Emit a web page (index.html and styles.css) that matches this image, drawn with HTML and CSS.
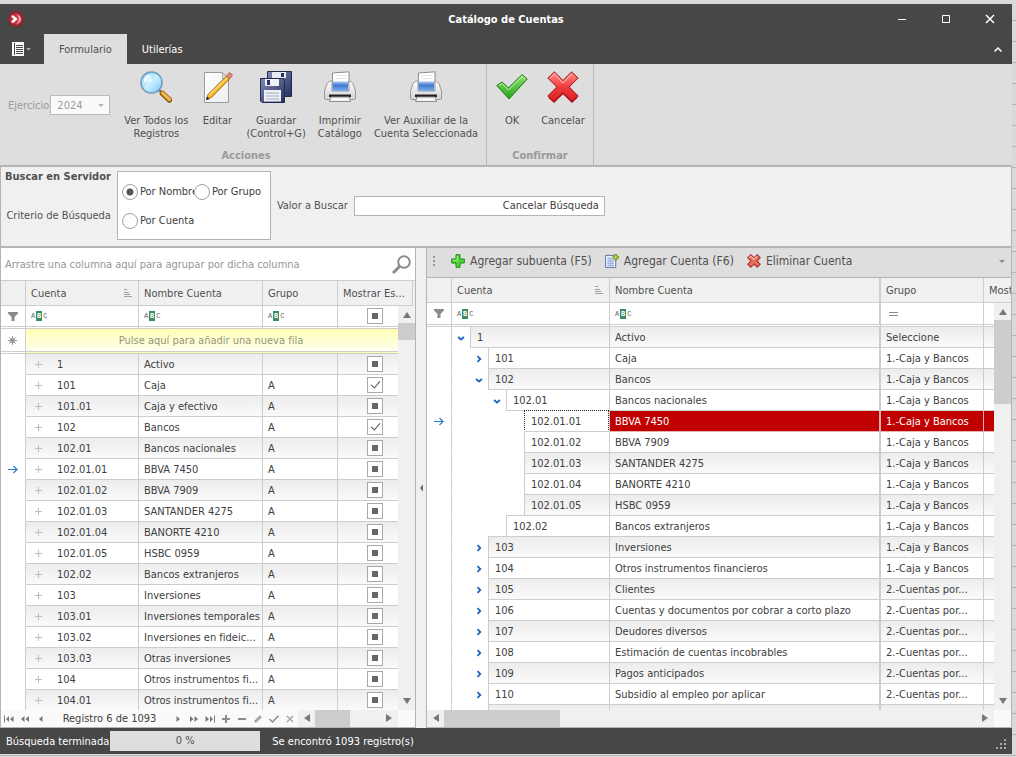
FILE: index.html
```html
<!DOCTYPE html>
<html lang="es">
<head>
    <meta charset="UTF-8">
    <meta name="viewport" content="width=device-width, initial-scale=1.0">
    <title>Catálogo de Cuentas</title>
    <link rel="stylesheet" href="styles.css">
</head>
<body>
    <!-- Iconos compartidos -->
    <svg class="sprite" aria-hidden="true">
        <defs>
            <linearGradient id="g-lens" x1="0" y1="0" x2="1" y2="1"><stop offset="0" stop-color="#8fd0fa"/><stop offset=".5" stop-color="#c9f0ff"/><stop offset="1" stop-color="#79c2f3"/></linearGradient>
            <linearGradient id="g-page" x1="0" y1="0" x2="1" y2="1"><stop offset="0" stop-color="#fff"/><stop offset="1" stop-color="#ececec"/></linearGradient>
            <linearGradient id="g-disk" x1="0" y1="0" x2="1" y2="1"><stop offset="0" stop-color="#7f8cb5"/><stop offset="1" stop-color="#262f5c"/></linearGradient>
            <linearGradient id="g-print" x1="0" y1="0" x2="0" y2="1"><stop offset="0" stop-color="#fff"/><stop offset="1" stop-color="#d2d2d6"/></linearGradient>
            <linearGradient id="g-blue" x1="0" y1="0" x2="0" y2="1"><stop offset="0" stop-color="#a8ccf5"/><stop offset=".4" stop-color="#4279cb"/><stop offset="1" stop-color="#7db0ee"/></linearGradient>
            <linearGradient id="g-green" x1="0" y1="0" x2="0" y2="1"><stop offset="0" stop-color="#8fe36a"/><stop offset="1" stop-color="#25a51b"/></linearGradient>
            <linearGradient id="g-red" x1="0" y1="0" x2="0" y2="1"><stop offset="0" stop-color="#ff8f8b"/><stop offset=".5" stop-color="#ef3a3a"/><stop offset="1" stop-color="#d81f25"/></linearGradient>
            <radialGradient id="g-logo" cx=".5" cy=".5" r=".5"><stop offset="0" stop-color="#d8505a"/><stop offset=".7" stop-color="#b82a35"/><stop offset="1" stop-color="#8f1822"/></radialGradient>
        </defs>
        <symbol id="i-print" viewBox="0 0 32 32">
            <path d="M8.500 2L25 .8V12H8.500z" fill="#fff" stroke="#8c8c8c"/>
            <path d="M11 4.500h11M11 7.500h11" stroke="#e4e4e4"/>
            <path d="M3 12.500L6 10h2v10h17V10h1l3 2.500L31.500 20v7q0 1.500-1.500 1.500H2Q.5 28.500.5 27v-7z" fill="url(#g-print)" stroke="#9a9a9e"/>
            <path d="M8.500 10.500H24V20H8.500z" fill="url(#g-blue)"/>
            <path d="M5 23.500h22v2.500H5z" fill="#222"/>
            <path d="M7 26h18l1.500 4.500h-21z" fill="#f5f5f5" stroke="#8c8c8c"/>
        </symbol>
        <symbol id="i-sort" viewBox="0 0 8 8"><path d="M0 .5h3M0 3.500h5M0 5.500h6M0 7.500h8" stroke="#a0a0a0"/></symbol>
        <symbol id="i-filter" viewBox="0 0 10 9"><path d="M0 0h10v1.500L6.500 5v4h-3V5L0 1.500z" fill="#8c8c8c"/></symbol>
        <symbol id="i-arrow" viewBox="0 0 10 9"><path d="M0 4.500h9M5.500 1l3.500 3.500L5.500 8" fill="none" stroke="#2e7ad0" stroke-width="1.200"/></symbol>
        <symbol id="i-closed" viewBox="0 0 8 8"><path d="M2.500 1.200L5.300 4 2.500 6.800" fill="none" stroke="#1f66bf" stroke-width="1.800"/></symbol>
        <symbol id="i-open" viewBox="0 0 8 8"><path d="M1 3L4 5.500 7 3" fill="none" stroke="#1f66bf" stroke-width="1.800"/></symbol>
        <symbol id="i-plus" viewBox="0 0 7 7"><path d="M3.500 0v7M0 3.500h7" stroke="#bdbdbd"/></symbol>
    </svg>

    <div class="window">
        <header class="titlebar">
            <svg class="logo" viewBox="0 0 16 16"><circle cx="8" cy="8" r="7.700" fill="url(#g-logo)"/><path d="M8 3q5 1.500 5 5t-5 5.500q3-2.500 3-5.500T8 3z" fill="#e9a9b4"/><path d="M3.500 4.500h2L9.500 8l-4 3.700h-2V10L6 8 3.500 6z" fill="#fff"/></svg>
            <h1>Catálogo de Cuentas</h1>
            <div class="window-buttons">
                <button type="button" aria-label="Minimizar"><svg viewBox="0 0 10 10"><path d="M1 5.500h8" stroke="#fff"/></svg></button>
                <button type="button" aria-label="Maximizar"><svg viewBox="0 0 10 10"><path d="M1.500 1.500h7v7h-7z" fill="none" stroke="#fff"/></svg></button>
                <button type="button" aria-label="Cerrar"><svg viewBox="0 0 10 10"><path d="M1 1l8 8M9 1L1 9" stroke="#fff" stroke-width="1.500"/></svg></button>
            </div>
        </header>

        <nav class="tabs">
            <button type="button" class="menu-button" aria-label="Menú"><svg viewBox="0 0 19 14"><path d="M0 0h12v14H0z" fill="#fff"/><path d="M2.500 1v12M4 3.500h7M4 5.500h7M4 7.500h7M4 9.500h7M4 11.500h7" stroke="#474747"/><path d="M14 6h5l-2.500 2.500z" fill="#aaa"/></svg></button>
            <a href="#" class="tab active">Formulario</a>
            <a href="#" class="tab">Utilerías</a>
            <button type="button" class="collapse" aria-label="Contraer"><svg viewBox="0 0 8 5"><path d="M.5 4.500L4 1l3.500 3.500" fill="none" stroke="#fff" stroke-width="1.500"/></svg></button>
        </nav>

        <section class="ribbon">
            <div class="ribbon-group">
                <div class="ribbon-items">
                    <div class="year">
                        <label for="ejercicio">Ejercicio</label>
                        <div class="select-box">
                            <select id="ejercicio" disabled><option>2024</option></select>
                            <svg viewBox="0 0 6 3"><path d="M0 0h6L3 3z" fill="#b4b4b4"/></svg>
                        </div>
                    </div>
                    <button type="button" class="ribbon-button">
                        <svg viewBox="0 0 32 32"><path d="M19 19l4 4" stroke="#777" stroke-width="2.500"/><path d="M22.500 22.500l7 6.500" stroke="#8a5a14" stroke-width="5.500" stroke-linecap="round"/><path d="M22.500 22l7 6.500" stroke="#f2b54a" stroke-width="3.200" stroke-linecap="round"/><circle cx="11.500" cy="11.500" r="10.500" fill="url(#g-lens)" stroke="#6f9dbd" stroke-width="1.500"/><circle cx="8.500" cy="8.500" r="3.500" fill="#fff" opacity=".5"/><path d="M4.500 11q0-5.500 6-6.500" fill="none" stroke="#fff" stroke-width="1.500"/></svg>
                        <span>Ver Todos los<br>Registros</span>
                    </button>
                    <button type="button" class="ribbon-button">
                        <svg viewBox="0 0 32 32"><path d="M3.500 1.500h18l6 6v24h-24z" fill="url(#g-page)" stroke="#9b9b9b"/><path d="M21.500 1.500v6h6z" fill="#dcdcdc" stroke="#aaa"/><path d="M5.500 28.500l1.500-5L25.500 5l3 3L10.500 26.500z" fill="#f4b51f" stroke="#8a5d10" stroke-width=".8"/><path d="M8 24.500L26.500 6.500" stroke="#ffe184" stroke-width="1.200"/><path d="M25.500 5l3-3.500 3 2.500-3 4z" fill="#e98778" stroke="#a34e42" stroke-width=".8"/><path d="M5 29l1-3.500 2.500 2.500z" fill="#222"/></svg>
                        <span>Editar</span>
                    </button>
                    <button type="button" class="ribbon-button">
                        <svg viewBox="0 0 32 32"><path d="M7.500.5h24v25h-24z" fill="url(#g-disk)" stroke="#232a50"/><path d="M12 1h14v6H12z" fill="#e6eaf2"/><path d="M21 2h3v4h-3z" fill="#2b3460"/><path d="M.5 7.500H23l1.500 1.500v22.500H2L.5 30z" fill="url(#g-disk)" stroke="#232a50"/><path d="M5 8h14v7H5z" fill="#f1f3f8"/><path d="M7 9h3v5H7z" fill="#2b3460"/><path d="M4 19h17v11.500H4z" fill="#edeff4"/><path d="M6 22h13M6 25h13M6 28h13" stroke="#a3aac0"/></svg>
                        <span>Guardar<br>(Control+G)</span>
                    </button>
                    <button type="button" class="ribbon-button">
                        <svg><use href="#i-print"/></svg>
                        <span>Imprimir<br>Catálogo</span>
                    </button>
                    <button type="button" class="ribbon-button">
                        <svg><use href="#i-print"/></svg>
                        <span>Ver Auxiliar de la<br>Cuenta Seleccionada</span>
                    </button>
                </div>
                <h2>Acciones</h2>
            </div>
            <div class="ribbon-group confirm">
                <div class="ribbon-items">
                    <button type="button" class="ribbon-button">
                        <svg viewBox="0 0 32 32"><path d="M.8 14.500L6 11l6.500 6L26 3.500l5.200 4.500L13 28z" fill="url(#g-green)" stroke="#1d7a17" stroke-linejoin="round"/><path d="M3 14.500l3-2 6.500 6.500L26 5.500l3 2.500" fill="none" stroke="#c9f7b4"/></svg>
                        <span>OK</span>
                    </button>
                    <button type="button" class="ribbon-button">
                        <svg viewBox="0 0 32 32"><path d="M7.500.8L16 9.500 24.500.8l6.700 6.200-9 9 9 9-6.200 6.500L16 22.500l-9 9L.8 25l9-9-9-9z" fill="url(#g-red)" stroke="#a3161b" stroke-linejoin="round"/><path d="M3 7.500l4.500-4.500L16 12l8.500-9" fill="none" stroke="#ffc4c0"/><path d="M2 26.500l5 4 9-8.500 9 8.500 5-4" fill="none" stroke="#b0131a" stroke-width="1.500"/></svg>
                        <span>Cancelar</span>
                    </button>
                </div>
                <h2>Confirmar</h2>
            </div>
        </section>

        <!-- Búsqueda en servidor -->
        <form class="search">
            <div class="search-titles">
                <h2>Buscar en Servidor</h2>
                <span id="criterio">Criterio de Búsqueda</span>
            </div>
            <div class="radios" role="radiogroup" aria-labelledby="criterio">
                <label><input type="radio" name="criterio" checked>Por Nombre</label>
                <label><input type="radio" name="criterio">Por Grupo</label>
                <label><input type="radio" name="criterio">Por Cuenta</label>
            </div>
            <label for="valor">Valor a Buscar</label>
            <div class="search-box">
                <input type="text" id="valor">
                <button type="button">Cancelar Búsqueda</button>
            </div>
        </form>

        <main class="panels">
            <section class="pane left">
                <div class="group-panel">
                    <span>Arrastre una columna aquí para agrupar por dicha columna</span>
                    <button type="button" aria-label="Buscar"><svg viewBox="0 0 19 19"><circle cx="12" cy="7" r="5.800" fill="none" stroke="#8c8c8c" stroke-width="2"/><path d="M8 11l-7 7" stroke="#8c8c8c" stroke-width="3"/></svg></button>
                </div>
                <div class="grid-area">
                    <table class="grid">
                        <colgroup><col class="c-ind"><col class="c-cuenta"><col class="c-nombre"><col class="c-grupo"><col class="c-mostrar"></colgroup>
                        <thead>
                            <tr class="head">
                                <th></th>
                                <th><div class="sorted">Cuenta<svg><use href="#i-sort"/></svg></div></th>
                                <th>Nombre Cuenta</th>
                                <th>Grupo</th>
                                <th>Mostrar Es...</th>
                            </tr>
                            <tr class="filter">
                                <td class="ind"><svg class="funnel"><use href="#i-filter"/></svg></td>
                                <td><span class="abc">A<b>B</b>C</span></td>
                                <td><span class="abc">A<b>B</b>C</span></td>
                                <td><span class="abc">A<b>B</b>C</span></td>
                                <td class="check"><input type="checkbox" class="mixed" aria-label="Filtro Mostrar"></td>
                            </tr>
                            <tr class="new-row">
                                <td class="ind"><svg class="star" viewBox="0 0 9 9"><path d="M4.500 0v9M0 4.500h9M1.300 1.300l6.400 6.400M7.700 1.300L1.300 7.700" stroke="#999"/><circle cx="4.500" cy="4.500" r="2.500" fill="#999"/></svg></td>
                                <td colspan="4">Pulse aquí para añadir una nueva fila</td>
                            </tr>
                        </thead>
                        <tbody id="cuentas"></tbody>
                    </table>
                    <div class="vscroll"><i class="up"></i><span class="thumb"></span><i class="down"></i></div>
                </div>
                <div class="navigator">
                    <button type="button" aria-label="Primero"><svg viewBox="0 0 10 7"><path d="M.5 0v7" stroke="#777"/><path d="M5 .5v6L2 3.500zM9.500 .5v6L6 3.500z" fill="#777"/></svg></button>
                    <button type="button" aria-label="Página anterior"><svg viewBox="0 0 10 7"><path d="M4.500 .5v6L1 3.500zM9 .5v6L5.500 3.500z" fill="#777"/></svg></button>
                    <button type="button" aria-label="Anterior"><svg viewBox="0 0 10 7"><path d="M6.500 .5v6L3 3.500z" fill="#777"/></svg></button>
                    <span class="record">Registro 6 de 1093</span>
                    <button type="button" aria-label="Siguiente"><svg viewBox="0 0 10 7"><path d="M3.500 .5v6L7 3.500z" fill="#777"/></svg></button>
                    <button type="button" aria-label="Página siguiente"><svg viewBox="0 0 10 7"><path d="M1 .5v6l3.500-3zM5.500 .5v6L9 3.500z" fill="#777"/></svg></button>
                    <button type="button" aria-label="Último"><svg viewBox="0 0 10 7"><path d="M9.500 0v7" stroke="#777"/><path d="M.5 .5v6l3.500-3zM5 .5v6l3-3z" fill="#777"/></svg></button>
                    <button type="button" aria-label="Añadir"><svg viewBox="0 0 8 8"><path d="M4 0v8M0 4h8" stroke="#8c8c8c" stroke-width="2"/></svg></button>
                    <button type="button" aria-label="Quitar"><svg viewBox="0 0 8 8"><path d="M0 4h8" stroke="#8c8c8c" stroke-width="2"/></svg></button>
                    <button type="button" aria-label="Editar"><svg viewBox="0 0 8 8"><path d="M1 7l.5-2L6 .8 7.300 2 3 6.500z" fill="#bbb" stroke="#8c8c8c"/></svg></button>
                    <button type="button" aria-label="Aceptar"><svg viewBox="0 0 10 8"><path d="M.5 4l3 3L9.500 .8" fill="none" stroke="#8c8c8c" stroke-width="1.500"/></svg></button>
                    <button type="button" aria-label="Cancelar"><svg viewBox="0 0 8 8"><path d="M1 1l6 6M7 1L1 7" stroke="#a0a0a0" stroke-width="1.200"/></svg></button>
                    <div class="hscroll"><i class="prev"></i><span class="thumb"></span><i class="next"></i></div>
                    <span class="corner"></span>
                </div>
            </section>

            <div class="splitter"><svg viewBox="0 0 5 8"><path d="M4 .5L1 4l3 3.500z" fill="#666"/></svg></div>

            <section class="pane right">
                <div class="toolbar">
                    <span class="grip"></span>
                    <button type="button"><svg viewBox="0 0 14 14"><path d="M5 .7h4V5h4.300v4H9v4.300H5V9H.7V5H5z" fill="#52d636" stroke="#1d8517"/><path d="M6.300 2v4.300H2" fill="none" stroke="#a6f290"/></svg>Agregar subuenta (F5)</button>
                    <button type="button"><svg viewBox="0 0 15 15"><path d="M.5 1.500h11v13H.5z" fill="#e9f1fc" stroke="#54719f"/><path d="M2.500 4.500h5M2.500 6.500h7M2.500 8.500h7M2.500 10.500h7M2.500 12.500h7" stroke="#7796c9"/><path d="M10.500.5h2V2.500h2v2h-2v2h-2v-2h-2v-2h2z" fill="#c6e04a" stroke="#6c8f17"/></svg>Agregar Cuenta (F6)</button>
                    <button type="button"><svg viewBox="0 0 13 13"><path d="M3.500.7l3 3 3-3 2.800 2.800-3 3 3 3-2.800 2.800-3-3-3 3L.7 9.500l3-3-3-3z" fill="#ea6c5c" stroke="#a8382c"/><path d="M2 3.500L3.500 2l3 3 3-3" fill="none" stroke="#ffc0b4"/></svg>Eliminar Cuenta</button>
                    <i class="more"></i>
                </div>
                <div class="grid-area">
                    <table class="grid tree">
                        <colgroup><col class="c-ind"><col class="c-cuenta"><col><col class="c-grupo"><col class="c-mostrar"></colgroup>
                        <thead>
                            <tr class="head">
                                <th></th>
                                <th><div class="sorted">Cuenta<svg><use href="#i-sort"/></svg></div></th>
                                <th class="fixed-edge">Nombre Cuenta</th>
                                <th>Grupo</th>
                                <th class="cut">Mostrar</th>
                            </tr>
                            <tr class="filter">
                                <td class="ind"><svg class="funnel"><use href="#i-filter"/></svg></td>
                                <td><span class="abc">A<b>B</b>C</span></td>
                                <td class="fixed-edge"><span class="abc">A<b>B</b>C</span></td>
                                <td><svg class="equals" viewBox="0 0 9 4"><path d="M0 .5h9M0 3.500h9" stroke="#888"/></svg></td>
                                <td></td>
                            </tr>
                        </thead>
                        <tbody id="arbol"></tbody>
                    </table>
                    <div class="vscroll"><i class="up"></i><span class="thumb"></span><i class="down"></i></div>
                </div>
                <div class="navigator">
                    <div class="hscroll"><i class="prev"></i><span class="thumb"></span><i class="next"></i></div>
                    <span class="corner"></span>
                </div>
            </section>
        </main>

        <footer class="status">
            <span>Búsqueda terminada</span>
            <div class="progress" role="progressbar" aria-valuenow="0">0 %</div>
            <span>Se encontró 1093 registro(s)</span>
            <svg class="resize" viewBox="0 0 11 11"><path d="M8 0h2v2H8zM8 4h2v2H8zM4 4h2v2H4zM8 8h2v2H8zM4 8h2v2H4zM0 8h2v2H0z" fill="#a8a8a8"/></svg>
        </footer>
    </div>

    <script src="script.js"></script>
</body>
</html>
```
FILE: styles.css
```css
* {
    margin: 0;
    padding: 0;
    box-sizing: border-box;
}

body {
    height: 100vh;
    padding: 4px 4px 3px 0;
    background: repeating-linear-gradient(#d9d9d9 0 20px, #b4b4b4 20px 21px);
    color: #404040;
    font-family: "DejaVu Sans Condensed", "Noto Sans", sans-serif;
    font-size: 11px;
    line-height: 13px;
    overflow: hidden;
}

button, input, select {
    border: none;
    background: none;
    color: inherit;
    font: inherit;
}

a {
    color: inherit;
    text-decoration: none;
}

h1, h2 {
    font-size: 11px;
}

svg {
    display: block;
    flex: none;
}

.sprite {
    position: absolute;
    width: 0;
    height: 0;
}

.window {
    display: flex;
    flex-direction: column;
    height: 100%;
    background: #f0f0f0;
}

/* Barra de título */
.titlebar {
    display: grid;
    grid-template-columns: 1fr auto 1fr;
    align-items: center;
    height: 30px;
    background: #474747;
    color: #fff;
}

.logo {
    width: 16px;
    height: 16px;
    margin-left: 8px;
}

.window-buttons {
    display: flex;
    justify-content: flex-end;
}

.window-buttons button {
    display: flex;
    align-items: center;
    justify-content: center;
    width: 44px;
    height: 30px;
}

.window-buttons svg {
    width: 10px;
    height: 10px;
}

/* Pestañas */
.tabs {
    display: flex;
    align-items: center;
    height: 30px;
    background: #474747;
    color: #fff;
}

.menu-button {
    width: 44px;
    padding-left: 12px;
}

.menu-button svg {
    width: 19px;
    height: 14px;
}

.tab {
    padding: 1px 15px 0;
    line-height: 29px;
}

.tab.active {
    background: #dedede;
    color: #505050;
}

.collapse {
    margin-left: auto;
    padding: 0 10px;
}

.collapse svg {
    width: 8px;
    height: 5px;
}

/* Cinta */
.ribbon {
    display: flex;
    height: 103px;
    background: #dedede;
    border-bottom: 2px solid #b4b4b4;
    color: #505050;
}

.ribbon-group {
    display: flex;
    flex-direction: column;
    justify-content: space-between;
    padding: 6px 2px 3px 8px;
    border-right: 1px solid #b9b9b9;
}

.ribbon-group h2 {
    color: #9a9a9a;
    text-align: center;
}

.ribbon-group.confirm {
    padding-left: 2px;
}

.ribbon-items {
    display: flex;
    align-items: flex-start;
}

.year {
    display: flex;
    align-items: center;
    gap: 1px;
    align-self: center;
    margin-right: 8px;
    color: #9a9a9a;
}

.select-box {
    display: flex;
    align-items: center;
    width: 60px;
    height: 20px;
    padding-right: 5px;
    background: #fafafa;
    border: 1px solid #b9b9b9;
}

.select-box select {
    flex: 1;
    appearance: none;
    padding-left: 6px;
    color: #9a9a9a;
    opacity: 1;
}

.select-box svg {
    width: 6px;
    height: 3px;
}

.ribbon-button {
    display: flex;
    flex-direction: column;
    align-items: center;
    gap: 11px;
    min-width: 46px;
    padding: 1px 6px 0;
}

.ribbon-button svg {
    width: 32px;
    height: 32px;
}

/* Búsqueda */
.search {
    display: flex;
    align-items: center;
    gap: 6px;
    height: 81px;
    padding: 0 5px 2px 4px;
    border-left: 1px solid #b4b4b4;
    border-right: 1px solid #b4b4b4;
    border-bottom: 2px solid #b4b4b4;
    color: #505050;
}

.search-titles {
    display: flex;
    flex-direction: column;
    align-items: flex-end;
    align-self: stretch;
    gap: 26px;
    padding-top: 3px;
}

.radios {
    display: grid;
    grid-template-columns: 72px auto;
    align-content: start;
    width: 154px;
    height: 69px;
    padding: 5px 4px;
    background: #fff;
    border: 1px solid #b4b4b4;
    color: #404040;
}

.radios label {
    display: flex;
    align-items: center;
    gap: 2px;
    height: 29px;
    overflow: hidden;
    white-space: nowrap;
}

.radios input {
    flex: none;
    appearance: none;
    width: 16px;
    height: 16px;
    border: 1px solid #a0a0a0;
    border-radius: 50%;
}

.radios input:checked {
    background: radial-gradient(#555 0 3px, #fff 4px);
}

.search-box {
    display: flex;
    width: 251px;
    height: 20px;
    background: #fff;
    border: 1px solid #b4b4b4;
    color: #404040;
}

.search-box input {
    flex: 1;
    min-width: 0;
}

.search-box button {
    padding: 0 5px;
}

/* Paneles */
.panels {
    display: flex;
    flex: 1;
    min-height: 0;
}

.pane {
    display: flex;
    flex-direction: column;
    min-height: 0;
    border: 1px solid #b4b4b4;
    border-top: none;
}

.pane.left {
    flex: none;
    width: 416px;
}

.pane.right {
    flex: 1;
    min-width: 0;
}

.splitter {
    display: flex;
    align-items: center;
    justify-content: center;
    width: 10px;
}

.splitter svg {
    width: 5px;
    height: 8px;
}

.group-panel {
    display: flex;
    align-items: center;
    justify-content: space-between;
    height: 33px;
    padding: 0 4px;
    background: #fff;
    border-bottom: 1px solid #cdcdcd;
    color: #969696;
}

.group-panel svg {
    width: 19px;
    height: 19px;
}

.toolbar {
    display: flex;
    align-items: center;
    height: 30px;
    padding: 0 6px 3px;
    background: #dedede;
    border-bottom: 1px solid #b4b4b4;
    color: #505050;
    font-size: 12px;
}

.toolbar button {
    display: flex;
    align-items: center;
    gap: 5px;
    margin-right: 13px;
}

.toolbar svg {
    width: 14px;
    height: 14px;
}

.grip {
    width: 2px;
    height: 10px;
    margin-right: 16px;
    background: repeating-linear-gradient(#969696 0 2px, transparent 2px 4px);
}

.more {
    margin-left: auto;
    border: 3px solid transparent;
    border-top-color: #8c8c8c;
    border-bottom: none;
}

/* Rejillas */
.grid-area {
    display: grid;
    grid-template-columns: minmax(0, 1fr) 17px;
    grid-template-rows: 100%;
    flex: 1;
    min-height: 0;
    overflow: hidden;
}

.grid {
    grid-area: 1 / 1 / 2 / 3;
    align-self: start;
    width: 412px;
    table-layout: fixed;
    border-collapse: separate;
    border-spacing: 0;
}

.grid.tree {
    width: 100%;
}

.vscroll {
    grid-area: 1 / 2 / 2 / 3;
    margin-top: 25px;
}

.c-ind {
    width: 25px;
}

.c-cuenta {
    width: 113px;
}

.c-nombre {
    width: 124px;
}

.c-grupo, .c-mostrar {
    width: 75px;
}

.tree .c-cuenta {
    width: 158px;
}

.tree .c-grupo {
    width: 103px;
}

.tree .c-mostrar {
    width: 27px;
}

.grid th, .grid td {
    height: 21px;
    padding: 0 0 0 5px;
    border-right: 1px solid #cdcdcd;
    border-bottom: 1px solid #cdcdcd;
    overflow: hidden;
    text-overflow: ellipsis;
    white-space: nowrap;
    text-align: left;
    font-weight: normal;
}

.grid td {
    background: #fff;
}

.grid .head th {
    height: 25px;
    background: #f0f0f0;
    color: #505050;
}

.grid .filter td {
    height: 23px;
    border-bottom: 3px double #cdcdcd;
}

.tree .filter td {
    height: 24px;
}

.grid .new-row td {
    height: 25px;
    border-bottom: 3px double #cdcdcd;
}

.grid .new-row td + td {
    background: linear-gradient(#ffffb4, #fffff0);
    color: #969678;
    text-align: center;
    padding-right: 21px;
}

.grid .cut {
    text-overflow: clip;
    border-right: none;
}

.grid .fixed-edge {
    border-right-width: 2px;
}

.grid .ind {
    padding: 0 7px;
}

tbody tr:nth-child(odd) td, tbody tr:nth-child(odd) .node {
    background: linear-gradient(#ececec, #fafafa);
}

.grid tbody .ind {
    background: #fff;
    border-bottom-color: #fff;
}

.sorted {
    display: flex;
    align-items: center;
    justify-content: space-between;
    padding-right: 6px;
}

.sorted svg {
    width: 8px;
    height: 8px;
}

.funnel {
    width: 10px;
    height: 9px;
}

.star {
    width: 9px;
    height: 9px;
}

.equals {
    width: 9px;
    height: 4px;
    margin-left: 3px;
}

.arrow {
    width: 10px;
    height: 9px;
}

.abc {
    display: flex;
    align-items: center;
    gap: 1px;
    color: #666;
    font: 7px/10px "Liberation Mono", monospace;
}

.abc b {
    width: 6px;
    background: #3c8c5f;
    color: #fff;
    text-align: center;
}

.grid .check {
    padding: 0;
    text-align: center;
    vertical-align: middle;
}

.check input {
    appearance: none;
    display: block;
    width: 16px;
    height: 16px;
    margin: 0 auto;
    background: #fff;
    border: 1px solid #a8a8a8;
}

.check input:indeterminate {
    background: linear-gradient(#666, #666) center / 6px 6px no-repeat #fff;
}

/* Palomita de la casilla marcada */
.check input:checked::after {
    content: "";
    display: block;
    width: 4px;
    height: 8px;
    margin: 1px 0 0 5px;
    border: solid #505050;
    border-width: 0 1px 1px 0;
    transform: rotate(40deg);
}

.account {
    display: flex;
    align-items: center;
}

.account button {
    display: flex;
    justify-content: center;
    width: 15px;
    margin-right: 11px;
}

.account svg {
    width: 7px;
    height: 7px;
}

/* Árbol */
.grid tbody .branch {
    padding: 0;
    background: #fff;
    border-bottom: none;
    overflow: visible;
}

.branch-line {
    display: flex;
    height: 21px;
}

.indent {
    display: flex;
    align-items: center;
    justify-content: center;
    flex: none;
    width: 18px;
}

.indent svg {
    width: 8px;
    height: 8px;
}

.node {
    flex: 1;
    height: 22px;
    margin-top: -1px;
    padding-left: 6px;
    border: 1px solid #cdcdcd;
    border-right: none;
    background: #fff;
    line-height: 21px;
}

tr.selected td.cell {
    background: #c00000;
    border-color: #e8b0b0;
    color: #fff;
}

tr.selected .branch .node {
    background: #fff;
    border: 1px dotted #222;
}

/* Barras de desplazamiento */
.vscroll, .hscroll {
    display: flex;
    background: #f0f0f0;
}

.vscroll {
    flex-direction: column;
}

.vscroll i, .hscroll i {
    flex: none;
    width: 0;
    height: 0;
    border: 4px solid transparent;
}

.vscroll .up {
    margin: 0 auto 5px;
    border-width: 6px 4px;
    border-bottom-color: #787878;
}

.vscroll .down {
    margin: auto auto 0;
    border-width: 6px 4px;
    border-top-color: #787878;
}

.vscroll .thumb {
    height: 17px;
    background: #cdcdcd;
}

.right .vscroll .thumb {
    height: 84px;
}

.hscroll {
    flex: 1;
    height: 17px;
}

.hscroll .prev {
    margin: 4px 5px 0 0;
    border-width: 4px 6px;
    border-right-color: #787878;
}

.hscroll .next {
    margin: 4px 0 0 auto;
    border-width: 4px 6px;
    border-left-color: #787878;
}

.hscroll .thumb {
    width: 35px;
    background: #cdcdcd;
}

.right .hscroll .thumb {
    width: 116px;
}

.navigator {
    display: flex;
    align-items: center;
    height: 17px;
    background: #fafafa;
}

.navigator button {
    display: flex;
    justify-content: center;
    width: 16px;
}

.navigator svg {
    width: 10px;
    height: 8px;
}

.record {
    width: 121px;
    text-align: center;
}

.corner {
    width: 17px;
}

/* Barra de estado */
.status {
    display: flex;
    align-items: center;
    height: 26px;
    padding: 0 5px 0 6px;
    background: #474747;
    color: #fff;
}

.progress {
    width: 150px;
    height: 20px;
    margin: 0 12px 0 1px;
    background: #dedede;
    color: #505050;
    line-height: 20px;
    text-align: center;
}

.resize {
    width: 11px;
    height: 11px;
    margin: 6px 0 0 auto;
}
```
FILE: script.js
```js
const cuentas = [
    ["1", "Activo", ""],
    ["101", "Caja", "A", true],
    ["101.01", "Caja y efectivo", "A"],
    ["102", "Bancos", "A", true],
    ["102.01", "Bancos nacionales", "A"],
    ["102.01.01", "BBVA 7450", "A"],
    ["102.01.02", "BBVA 7909", "A"],
    ["102.01.03", "SANTANDER 4275", "A"],
    ["102.01.04", "BANORTE 4210", "A"],
    ["102.01.05", "HSBC 0959", "A"],
    ["102.02", "Bancos extranjeros", "A"],
    ["103", "Inversiones", "A"],
    ["103.01", "Inversiones temporales", "A"],
    ["103.02", "Inversiones en fideic...", "A"],
    ["103.03", "Otras inversiones", "A"],
    ["104", "Otros instrumentos fi...", "A"],
    ["104.01", "Otros instrumentos fi...", "A"]
];

// nivel, estado, cuenta, nombre, grupo
const arbol = [
    [0, "open", "1", "Activo", "Seleccione"],
    [1, "closed", "101", "Caja", "1.-Caja y Bancos"],
    [1, "open", "102", "Bancos", "1.-Caja y Bancos"],
    [2, "open", "102.01", "Bancos nacionales", "1.-Caja y Bancos"],
    [3, "", "102.01.01", "BBVA 7450", "1.-Caja y Bancos"],
    [3, "", "102.01.02", "BBVA 7909", "1.-Caja y Bancos"],
    [3, "", "102.01.03", "SANTANDER 4275", "1.-Caja y Bancos"],
    [3, "", "102.01.04", "BANORTE 4210", "1.-Caja y Bancos"],
    [3, "", "102.01.05", "HSBC 0959", "1.-Caja y Bancos"],
    [2, "", "102.02", "Bancos extranjeros", "1.-Caja y Bancos"],
    [1, "closed", "103", "Inversiones", "1.-Caja y Bancos"],
    [1, "closed", "104", "Otros instrumentos financieros", "1.-Caja y Bancos"],
    [1, "closed", "105", "Clientes", "2.-Cuentas por..."],
    [1, "closed", "106", "Cuentas y documentos por cobrar a corto plazo", "2.-Cuentas por..."],
    [1, "closed", "107", "Deudores diversos", "2.-Cuentas por..."],
    [1, "closed", "108", "Estimación de cuentas incobrables", "2.-Cuentas por..."],
    [1, "closed", "109", "Pagos anticipados", "2.-Cuentas por..."],
    [1, "closed", "110", "Subsidio al empleo por aplicar", "2.-Cuentas por..."],
    [1, "", "", "", ""]
];

const actual = "102.01.01";

function indicador(cuenta) {
    const flecha = cuenta === actual ? '<svg class="arrow"><use href="#i-arrow"/></svg>' : "";
    return `<td class="ind">${flecha}</td>`;
}

document.getElementById("cuentas").innerHTML = cuentas.map(([cuenta, nombre, grupo, mostrar]) => `
    <tr>
        ${indicador(cuenta)}
        <td><div class="account"><button type="button" aria-label="Expandir"><svg><use href="#i-plus"/></svg></button>${cuenta}</div></td>
        <td>${nombre}</td>
        <td>${grupo}</td>
        <td class="check"><input type="checkbox" aria-label="Mostrar ${cuenta}" ${mostrar ? "checked" : 'class="mixed"'}></td>
    </tr>`).join("");

document.getElementById("arbol").innerHTML = arbol.map(([nivel, estado, cuenta, nombre, grupo]) => {
    const vacios = '<span class="indent"></span>'.repeat(nivel);
    const icono = estado ? `<svg><use href="#i-${estado}"/></svg>` : "";
    return `
    <tr class="${cuenta === actual ? "selected" : ""}">
        ${indicador(cuenta)}
        <td class="branch"><div class="branch-line">${vacios}<span class="indent">${icono}</span><span class="node">${cuenta}</span></div></td>
        <td class="cell fixed-edge">${nombre}</td>
        <td class="cell">${grupo}</td>
        <td class="cell"></td>
    </tr>`;
}).join("");

// Las casillas sin valor se muestran en estado intermedio
document.querySelectorAll(".mixed").forEach(casilla => {
    casilla.indeterminate = true;
});
```
